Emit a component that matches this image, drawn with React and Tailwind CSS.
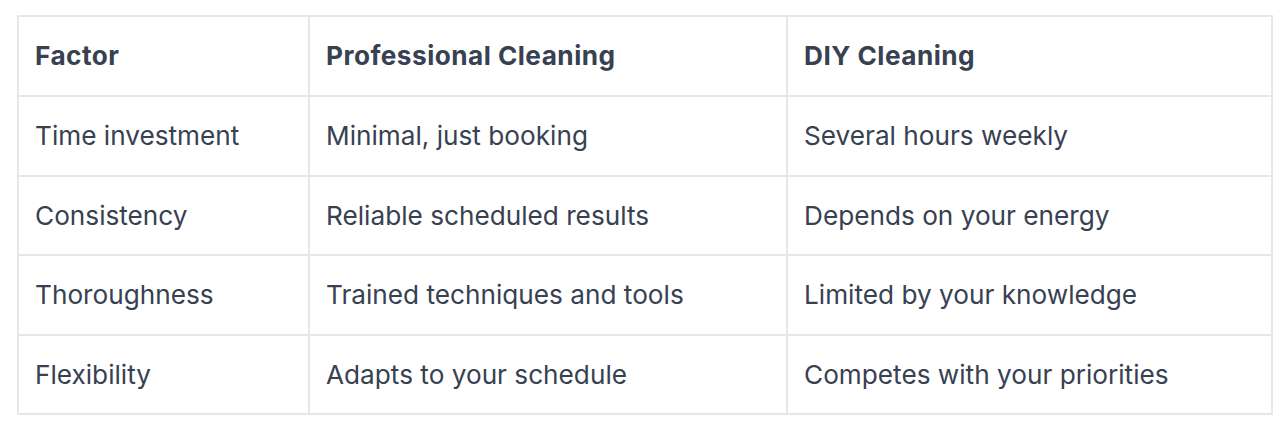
const rows = [
  ['Time investment', 'Minimal, just booking', 'Several hours weekly'],
  ['Consistency', 'Reliable scheduled results', 'Depends on your energy'],
  ['Thoroughness', 'Trained techniques and tools', 'Limited by your knowledge'],
  ['Flexibility', 'Adapts to your schedule', 'Competes with your priorities'],
];

export default function App() {
  return (
    <div className="min-h-[434px] bg-white pl-[17px] pt-[15px] font-['Inter',sans-serif] text-[26.2px] text-[#374151]">
      <table className="w-[1256px] table-fixed border-collapse">
        <colgroup>
          <col className="w-[291px]" />
          <col className="w-[478px]" />
          <col />
        </colgroup>
        <thead>
          <tr className="h-[80px]">
            <th className="border-2 border-[#e5e7eb] px-[16px] text-left font-bold tracking-[0.018em]">Factor</th>
            <th className="border-2 border-[#e5e7eb] px-[16px] text-left font-bold tracking-[0.018em]">Professional Cleaning</th>
            <th className="border-2 border-[#e5e7eb] px-[16px] text-left font-bold tracking-[0.018em]">DIY Cleaning</th>
          </tr>
        </thead>
        <tbody>
          {rows.map((r) => (
            <tr key={r[0]} className="h-[79.5px]">
              {r.map((c) => (
                <td key={c} className="border-2 border-[#e5e7eb] px-[16px]">
                  {c}
                </td>
              ))}
            </tr>
          ))}
        </tbody>
      </table>
    </div>
  );
}
